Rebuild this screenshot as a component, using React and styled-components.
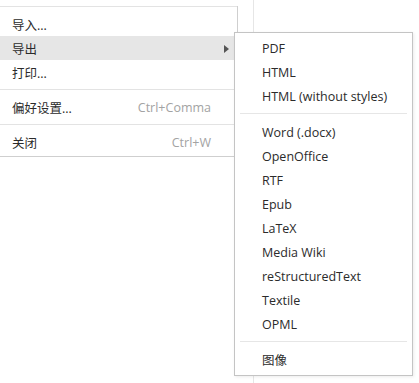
import React from 'react';
import styled, { createGlobalStyle } from 'styled-components';

const GlobalStyle = createGlobalStyle`
  html, body {
    margin: 0;
    padding: 0;
    background: #fff;
  }
  body {
    font-family: "Open Sans", "Noto Sans CJK SC", sans-serif;
    font-size: 12.5px;
    color: #2b2b2b;
  }
`;

const fileItems = [
  { label: '导入...' },
  { label: '导出', submenu: true, active: true },
  { label: '打印...', sepAfter: true },
  { label: '偏好设置...', shortcut: 'Ctrl+Comma', sepAfter: true },
  { label: '关闭', shortcut: 'Ctrl+W' },
];

const exportItems = [
  { label: 'PDF' },
  { label: 'HTML' },
  { label: 'HTML (without styles)', sepAfter: true },
  { label: 'Word (.docx)' },
  { label: 'OpenOffice' },
  { label: 'RTF' },
  { label: 'Epub' },
  { label: 'LaTeX' },
  { label: 'Media Wiki' },
  { label: 'reStructuredText' },
  { label: 'Textile' },
  { label: 'OPML', sepAfter: true },
  { label: '图像' },
];

export default function App() {
  return (
    <>
      <GlobalStyle />
      <Page>
        <Sidebar>
          <Menu>
            <Separator $top="6px" />
            {fileItems.map(item => (
              <React.Fragment key={item.label}>
                <Row $active={item.active}>
                  <Label>{item.label}</Label>
                  {item.shortcut && <Shortcut>{item.shortcut}</Shortcut>}
                  <Trail>
                    {item.submenu && (
                      <svg width="5" height="8" viewBox="0 0 5 8">
                        <path d="M0 0 L5 4 L0 8 Z" fill="#555" />
                      </svg>
                    )}
                  </Trail>
                </Row>
                {item.sepAfter && <Separator />}
              </React.Fragment>
            ))}
          </Menu>
        </Sidebar>
        <SubMenu>
          {exportItems.map(item => (
            <React.Fragment key={item.label}>
              <SubRow>{item.label}</SubRow>
              {item.sepAfter && <SubSeparator />}
            </React.Fragment>
          ))}
        </SubMenu>
      </Page>
    </>
  );
}

const Page = styled.div`
  position: relative;
  display: flex;
  height: 383px;
  overflow: hidden;
`;

const Sidebar = styled.div`
  width: 253px;
  height: 100%;
  border-right: 1px solid #e6e6e6;
`;

const Menu = styled.div`
  width: 237px;
  background: #fff;
  border-right: 1px solid #cfcfcf;
  border-bottom: 1px solid #cfcfcf;
  padding-bottom: 2px;
`;

const Separator = styled.div`
  height: 1px;
  background: #e3e3e3;
  margin: ${p => p.$top || '5px'} 0 5px;
`;

const Row = styled.div`
  display: flex;
  align-items: center;
  height: 24px;
  padding: 1px 8px 0 12px;
  box-sizing: border-box;
  background: ${p => (p.$active ? '#e6e6e6' : 'transparent')};
`;

const Label = styled.span`
  flex: 1;
  white-space: nowrap;
`;

const Shortcut = styled.span`
  color: #a3a3a3;
  white-space: nowrap;
`;

const Trail = styled.span`
  width: 18px;
  display: flex;
  justify-content: flex-end;
  align-items: center;
`;

const SubMenu = styled.div`
  position: absolute;
  left: 234px;
  top: 32px;
  width: 177px;
  background: #fff;
  border: 1px solid #c4c4c4;
  box-shadow: 1px 1px 3px rgba(0, 0, 0, 0.08);
  padding: 3px 0 3px;
`;

const SubRow = styled.div`
  height: 24px;
  line-height: 26px;
  padding-left: 27px;
  white-space: nowrap;
`;

const SubSeparator = styled.div`
  height: 1px;
  background: #e6e6e6;
  margin: 5px 5px 6px;
`;
